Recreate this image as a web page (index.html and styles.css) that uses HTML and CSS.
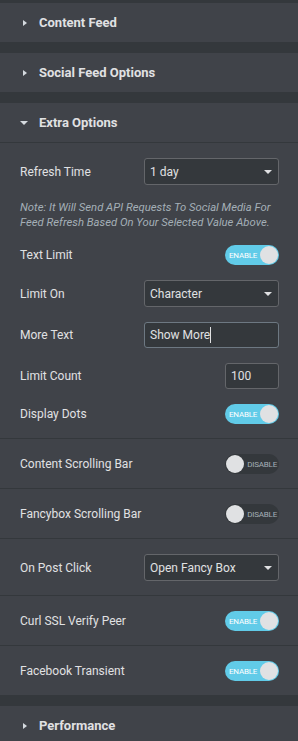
FILE: index.html
```html
<!DOCTYPE html>
<html lang="en">
<head>
    <meta charset="UTF-8">
    <meta name="viewport" content="width=device-width, initial-scale=1.0">
    <title>Extra Options</title>
    <link rel="stylesheet" href="styles.css">
</head>
<body>

    <div class="panel">
        <div class="section">
            <div class="section-head"><span class="arrow right"></span>Content Feed</div>
        </div>

        <div class="section">
            <div class="section-head"><span class="arrow right"></span>Social Feed Options</div>
        </div>

        <div class="section">
            <div class="section-head"><span class="arrow down"></span>Extra Options</div>
            <div class="section-body">
                <div class="group">
                    <div class="control">
                        <label>Refresh Time</label>
                        <div class="select">1 day<span class="caret"></span></div>
                    </div>
                    <p class="note">Note: It Will Send API Requests To Social Media For Feed Refresh Based On Your Selected Value Above.</p>
                    <div class="control">
                        <label>Text Limit</label>
                        <div class="toggle on"><span class="toggle-text">Enable</span><span class="knob"></span></div>
                    </div>
                    <div class="control">
                        <label>Limit On</label>
                        <div class="select">Character<span class="caret"></span></div>
                    </div>
                    <div class="control">
                        <label>More Text</label>
                        <div class="input wide focus"><span class="cursor">Show More</span></div>
                    </div>
                    <div class="control">
                        <label>Limit Count</label>
                        <div class="input small">100</div>
                    </div>
                    <div class="control">
                        <label>Display Dots</label>
                        <div class="toggle on"><span class="toggle-text">Enable</span><span class="knob"></span></div>
                    </div>
                </div>

                <div class="group sep">
                    <div class="control">
                        <label>Content Scrolling Bar</label>
                        <div class="toggle off"><span class="knob"></span><span class="toggle-text">Disable</span></div>
                    </div>
                </div>
                <div class="group sep">
                    <div class="control">
                        <label>Fancybox Scrolling Bar</label>
                        <div class="toggle off"><span class="knob"></span><span class="toggle-text">Disable</span></div>
                    </div>
                </div>
                <div class="group sep">
                    <div class="control">
                        <label>On Post Click</label>
                        <div class="select">Open Fancy Box<span class="caret"></span></div>
                    </div>
                </div>
                <div class="group sep">
                    <div class="control">
                        <label>Curl SSL Verify Peer</label>
                        <div class="toggle on"><span class="toggle-text">Enable</span><span class="knob"></span></div>
                    </div>
                </div>
                <div class="group sep">
                    <div class="control">
                        <label>Facebook Transient</label>
                        <div class="toggle on"><span class="toggle-text">Enable</span><span class="knob"></span></div>
                    </div>
                </div>
            </div>
        </div>

        <div class="section">
            <div class="section-head"><span class="arrow right"></span>Performance</div>
        </div>
    </div>

</body>
</html>
```

FILE: styles.css
```css
body { margin: 0; background: #34383c; font-family: Roboto, "Liberation Sans", Arial, sans-serif; color: #e0e1e3; font-size: 12px; }
.panel { padding-top: 3px; }
.section { background: #404349; margin-bottom: 11px; }
.section-head { height: 39px; display: flex; align-items: center; padding-left: 20px; font-weight: bold; font-size: 13px; color: #e0e1e3; }
.arrow { width: 19px; display: flex; justify-content: flex-start; }
.arrow.right::before { content: ""; margin-left: 3px; border-left: 4px solid #d5dadf; border-top: 3.5px solid transparent; border-bottom: 3.5px solid transparent; }
.arrow.down::before { content: ""; margin-left: 0; border-top: 4px solid #d5dadf; border-left: 4px solid transparent; border-right: 4px solid transparent; }
.section-body { border-top: 1px solid #34383c; }
.group { padding: 15px 19px 14px 20px; display: flex; flex-direction: column; gap: 15px; }
.group.sep { border-top: 1px solid #34383c; }
.control { display: flex; align-items: center; justify-content: space-between; min-height: 20px; }
.control label { flex: 1; color: #e0e1e3; }
.note { margin: 0; font-size: 11.3px; line-height: 15px; font-style: italic; color: #a4afb7; }
.select, .input { box-sizing: border-box; background: #34383c; border: 1px solid #64666a; border-radius: 3px; color: #e0e1e3; display: flex; align-items: center; }
.select { width: 135px; height: 27px; padding: 0 5px; position: relative; }
.caret { position: absolute; right: 6px; top: 11px; border-top: 4px solid #e0e1e3; border-left: 4px solid transparent; border-right: 4px solid transparent; }
.input { height: 26px; padding: 0 5px; }
.input.wide { width: 135px; border-color: #6d7882; }
.input.small { width: 54px; }
.cursor { border-right: 1px solid #e0e1e3; line-height: 16px; }
.toggle { box-sizing: border-box; width: 54px; height: 20px; border-radius: 10px; display: flex; align-items: center; padding: 1px; font-size: 8px; text-transform: uppercase; letter-spacing: -0.2px; }
.toggle.on { background: #61cbe8; justify-content: space-between; color: #fff; padding-left: 4px; }
.toggle.off { background: #34383c; justify-content: space-between; color: #a4afb7; padding-right: 2px; }
.knob { width: 18px; height: 18px; border-radius: 50%; background: #e0e1e3; }
```
